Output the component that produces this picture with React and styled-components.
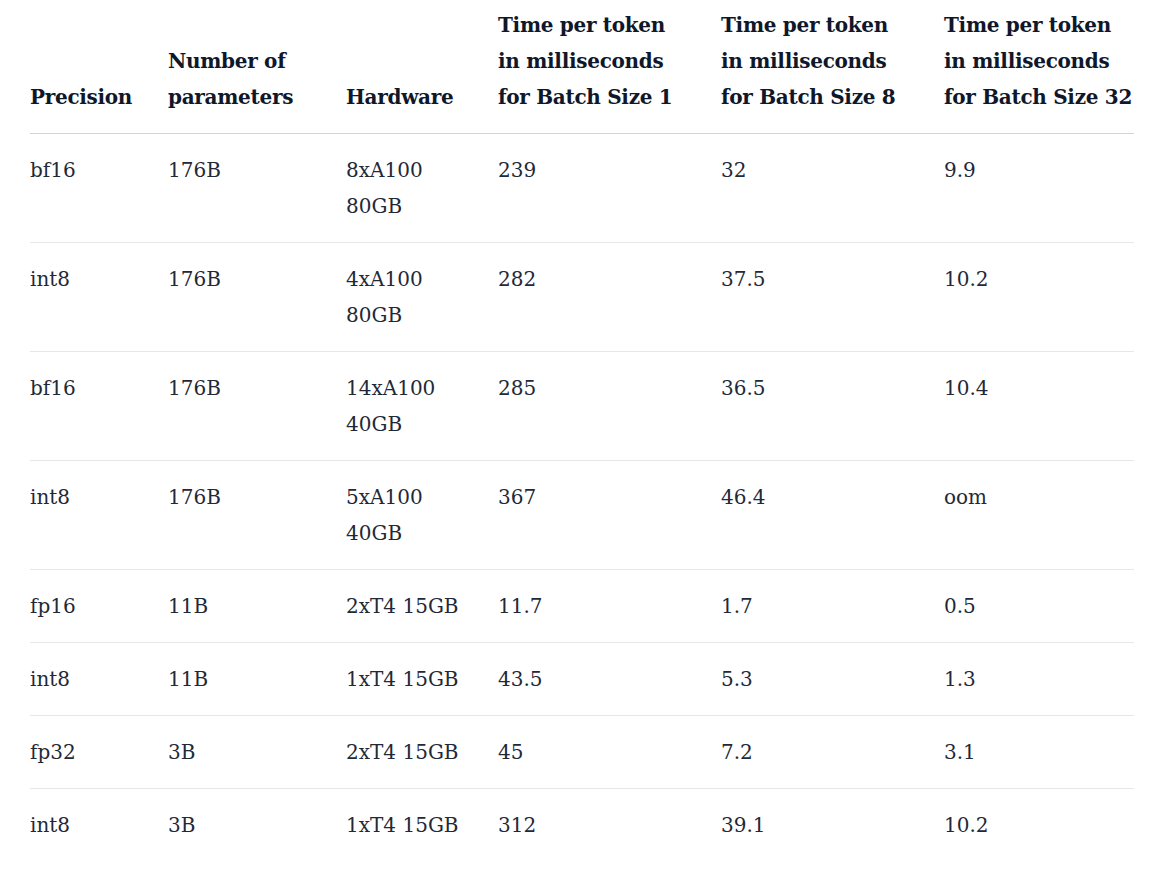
import React from 'react';
import styled, { createGlobalStyle } from 'styled-components';

const GlobalStyle = createGlobalStyle`
  body {
    margin: 0;
    background: #ffffff;
    font-family: 'DejaVu Serif', 'Liberation Serif', serif;
  }
`;

const Page = styled.div`
  padding: 7px 20px 20px 30px;
`;

const Table = styled.table`
  width: 1104px;
  border-collapse: collapse;
  table-layout: fixed;
  font-size: 20px;
  line-height: 36px;
`;

const HeadCell = styled.th`
  text-align: left;
  vertical-align: bottom;
  font-weight: 700;
  letter-spacing: -0.3px;
  color: #0f172a;
  padding: 0 0 18px 0;
  border-bottom: 1px solid #d1d5db;
`;

const HeadLine = styled.span`
  display: block;
  white-space: nowrap;
`;

const Row = styled.tr`
  border-bottom: 1px solid #e5e7eb;
  &:last-child {
    border-bottom: none;
  }
`;

const Cell = styled.td`
  vertical-align: top;
  color: #1f2937;
  padding: 18px 16px 18px 0;
`;

const columns = [
  { lines: ['Precision'], width: 138 },
  { lines: ['Number of', 'parameters'], width: 178 },
  { lines: ['Hardware'], width: 152 },
  { lines: ['Time per token', 'in milliseconds', 'for Batch Size 1'], width: 223 },
  { lines: ['Time per token', 'in milliseconds', 'for Batch Size 8'], width: 223 },
  { lines: ['Time per token', 'in milliseconds', 'for Batch Size 32'], width: 190 },
];

const rows = [
  ['bf16', '176B', '8xA100 80GB', '239', '32', '9.9'],
  ['int8', '176B', '4xA100 80GB', '282', '37.5', '10.2'],
  ['bf16', '176B', '14xA100 40GB', '285', '36.5', '10.4'],
  ['int8', '176B', '5xA100 40GB', '367', '46.4', 'oom'],
  ['fp16', '11B', '2xT4 15GB', '11.7', '1.7', '0.5'],
  ['int8', '11B', '1xT4 15GB', '43.5', '5.3', '1.3'],
  ['fp32', '3B', '2xT4 15GB', '45', '7.2', '3.1'],
  ['int8', '3B', '1xT4 15GB', '312', '39.1', '10.2'],
];

export default function App() {
  return (
    <Page>
      <GlobalStyle />
      <Table>
        <colgroup>
          {columns.map((c, i) => (
            <col key={i} style={{ width: c.width }} />
          ))}
        </colgroup>
        <thead>
          <tr>
            {columns.map((c, i) => (
              <HeadCell key={i}>
                {c.lines.map((l) => (
                  <HeadLine key={l}>{l}</HeadLine>
                ))}
              </HeadCell>
            ))}
          </tr>
        </thead>
        <tbody>
          {rows.map((r, i) => (
            <Row key={i}>
              {r.map((v, j) => (
                <Cell key={j}>{v}</Cell>
              ))}
            </Row>
          ))}
        </tbody>
      </Table>
    </Page>
  );
}
